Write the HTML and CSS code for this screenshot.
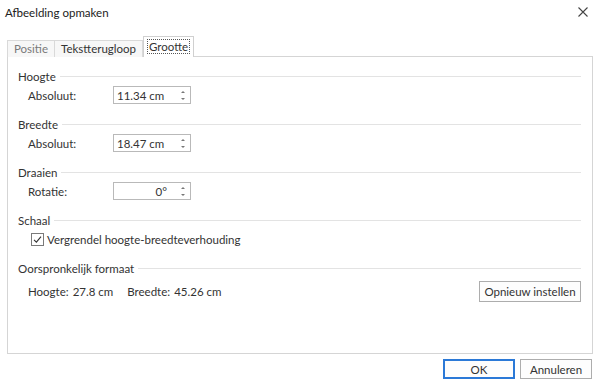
FILE: index.html
```html
<!DOCTYPE html>
<html lang="nl">
<head>
    <meta charset="UTF-8">
    <title>Afbeelding opmaken</title>
    <link rel="stylesheet" href="styles.css">
</head>
<body>
    <div class="dialog">
        <div class="titlebar">
            <span class="title">Afbeelding opmaken</span>
            <svg class="close" width="10" height="10" viewBox="0 0 10 10">
                <path d="M0.5 0.5 L9.5 9.5 M9.5 0.5 L0.5 9.5" stroke="#444" stroke-width="1.1" fill="none"/>
            </svg>
        </div>

        <div class="tabs">
            <div class="tab disabled">Positie</div>
            <div class="tab">Tekstterugloop</div>
            <div class="tab active"><span class="focus">Grootte</span></div>
        </div>

        <div class="panel">
            <div class="group">
                <div class="group-head"><span>Hoogte</span><div class="rule"></div></div>
                <div class="row">
                    <label class="field-label">Absoluut:</label>
                    <div class="spin"><span class="value">11.34 cm</span><span class="arrows"><i class="up"></i><i class="down"></i></span></div>
                </div>
            </div>

            <div class="group">
                <div class="group-head"><span>Breedte</span><div class="rule"></div></div>
                <div class="row">
                    <label class="field-label">Absoluut:</label>
                    <div class="spin"><span class="value">18.47 cm</span><span class="arrows"><i class="up"></i><i class="down"></i></span></div>
                </div>
            </div>

            <div class="group">
                <div class="group-head"><span>Draaien</span><div class="rule"></div></div>
                <div class="row">
                    <label class="field-label">Rotatie:</label>
                    <div class="spin right"><span class="value">0°</span><span class="arrows"><i class="up"></i><i class="down"></i></span></div>
                </div>
            </div>

            <div class="group">
                <div class="group-head"><span>Schaal</span><div class="rule"></div></div>
                <div class="row">
                    <span class="checkbox">
                        <svg width="9" height="9" viewBox="0 0 9 9"><path d="M1 4.8 L3.4 7.2 L8 1.6" stroke="#333" stroke-width="1.1" fill="none"/></svg>
                    </span>
                    <span class="check-label">Vergrendel hoogte-breedteverhouding</span>
                </div>
            </div>

            <div class="group">
                <div class="group-head"><span>Oorspronkelijk formaat</span><div class="rule"></div></div>
                <div class="row original">
                    <span class="orig-label">Hoogte:</span><span class="orig-value">27.8 cm</span>
                    <span class="orig-label">Breedte:</span><span class="orig-value">45.26 cm</span>
                    <button class="btn reset">Opnieuw instellen</button>
                </div>
            </div>
        </div>

        <div class="footer">
            <button class="btn default">OK</button>
            <button class="btn">Annuleren</button>
        </div>
    </div>
</body>
</html>
```

FILE: styles.css
```css
body {
    margin: 0;
    padding: 0;
    background-color: #ffffff;
    font-family: Lato, 'Noto Sans', sans-serif;
    font-size: 11.5px;
    color: #333333;
}

.dialog {
    width: 600px;
    height: 388px;
}

.titlebar {
    height: 24px;
    display: flex;
    align-items: center;
    justify-content: space-between;
    padding: 0 12px 0 5px;
}

.title {
    color: #222;
}

/* Tabs */
.tabs {
    display: flex;
    align-items: flex-end;
    margin: 13px 0 -1px 7px;
    height: 20px;
    position: relative;
    z-index: 1;
}

.tab {
    height: 16px;
    line-height: 15px;
    padding: 0 6px;
    border: 1px solid #d9d9d9;
    border-bottom: none;
    background-color: #f7f7f7;
    color: #333;
}

.tab + .tab {
    border-left: none;
}

.tab.disabled {
    color: #7a7a7a;
}

.tab.active {
    height: 20px;
    line-height: 19px;
    padding: 0 4px;
    background-color: #ffffff;
    border-left: 1px solid #d0d0d0;
    border-color: #d0d0d0;
}

.focus {
    outline: 1px dotted #555;
    outline-offset: 0;
    padding: 0 1px;
}

/* Panel */
.panel {
    margin: 0 7px;
    height: 285px;
    border: 1px solid #d5d5d5;
    padding: 11px 11px 0 10px;
}

.group + .group {
    margin-top: 12px;
}

.group-head {
    display: flex;
    align-items: center;
    height: 16px;
    color: #333;
}

.rule {
    flex: 1;
    height: 1px;
    background-color: #e3e3e3;
    margin-left: 4px;
}

.row {
    display: flex;
    align-items: center;
    height: 18px;
    margin-top: 2px;
    padding-left: 10px;
}

.field-label {
    width: 85px;
}

.spin {
    width: 73px;
    height: 16px;
    border: 1px solid #b9b9b9;
    display: flex;
    align-items: center;
    justify-content: space-between;
    padding-left: 3px;
    box-sizing: content-box;
}

.spin.right .value {
    flex: 1;
    text-align: right;
    padding-right: 9px;
}

.arrows {
    width: 14px;
    display: flex;
    flex-direction: column;
    align-items: center;
    gap: 5px;
}

.arrows i {
    width: 0;
    height: 0;
    border-left: 2px solid transparent;
    border-right: 2px solid transparent;
}

.arrows .up {
    border-bottom: 2px solid #777;
}

.arrows .down {
    border-top: 2px solid #777;
}

.checkbox {
    width: 11px;
    height: 11px;
    border: 1px solid #7a7a7a;
    display: flex;
    align-items: center;
    justify-content: center;
    margin: 0 3px 0 3px;
}

.row.original {
    height: 21px;
    margin-top: 5px;
}

.orig-label {
    margin-right: 4px;
}

.orig-value {
    margin-right: 14px;
}

/* Buttons */
.btn {
    font-family: inherit;
    font-size: inherit;
    color: #333;
    background-color: #fdfdfd;
    border: 1px solid #adadad;
    height: 20px;
    padding: 0;
    width: 72px;
}

.btn.reset {
    margin-left: auto;
    width: 102px;
    height: 21px;
}

.btn.default {
    border: 1px solid #2b79d7;
    box-shadow: inset 0 0 0 1px #2b79d7;
}

.footer {
    display: flex;
    justify-content: flex-end;
    gap: 5px;
    padding: 5px 8px 0 0;
}
```
